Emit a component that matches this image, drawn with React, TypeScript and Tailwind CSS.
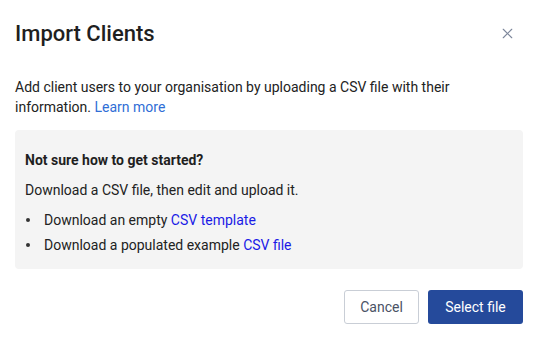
import { X } from "lucide-react";

export default function App() {
  return (
    <div
      className="w-[543px] h-[340px] bg-white text-[#222] pl-[15px] pr-[20px] pt-[20px]"
      style={{ fontFamily: "Roboto, 'Liberation Sans', sans-serif" }}
    >
      {/* Header */}
      <div className="flex items-center justify-between">
        <h1 className="text-[22px] leading-[28px] font-medium text-[#1f1f1f]">
          Import Clients
        </h1>
        <button className="mr-[7px] -mt-[1px] text-[#7d879b]">
          <X className="w-[17px] h-[17px]" strokeWidth={1.6} />
        </button>
      </div>

      {/* Body */}
      <p className="mt-[29px] text-[14px] leading-[20px] text-[#222]">
        Add client users to your organisation by uploading a CSV file with their
        information. <a className="text-[#2f6ed6]">Learn more</a>
      </p>

      <div className="mt-[13px] h-[139px] rounded-[4px] bg-[#f4f4f4] px-[10px] pt-[20px] text-[14px] leading-[20px]">
        <p className="font-bold text-[#1f1f1f]">Not sure how to get started?</p>
        <p className="mt-[10px]">Download a CSV file, then edit and upload it.</p>
        <ul className="mt-[10px] flex flex-col gap-[5px]">
          <li className="flex items-center">
            <span className="w-[19px] pl-[1px]">
              <span className="block w-[4px] h-[4px] rounded-full bg-[#333]" />
            </span>
            <span>
              Download an empty <a className="text-[#1a1ae6]">CSV template</a>
            </span>
          </li>
          <li className="flex items-center">
            <span className="w-[19px] pl-[1px]">
              <span className="block w-[4px] h-[4px] rounded-full bg-[#333]" />
            </span>
            <span>
              Download a populated example{" "}
              <a className="text-[#1a1ae6]">CSV file</a>
            </span>
          </li>
        </ul>
      </div>

      {/* Footer */}
      <div className="mt-[21px] flex justify-end gap-[9px]">
        <button className="h-[34px] w-[75px] rounded-[3px] border border-[#c9ced6] bg-white text-[14px] text-[#4a5265]">
          Cancel
        </button>
        <button className="h-[34px] w-[95px] rounded-[3px] bg-[#254a9b] text-[14px] text-white">
          Select file
        </button>
      </div>
    </div>
  );
}
